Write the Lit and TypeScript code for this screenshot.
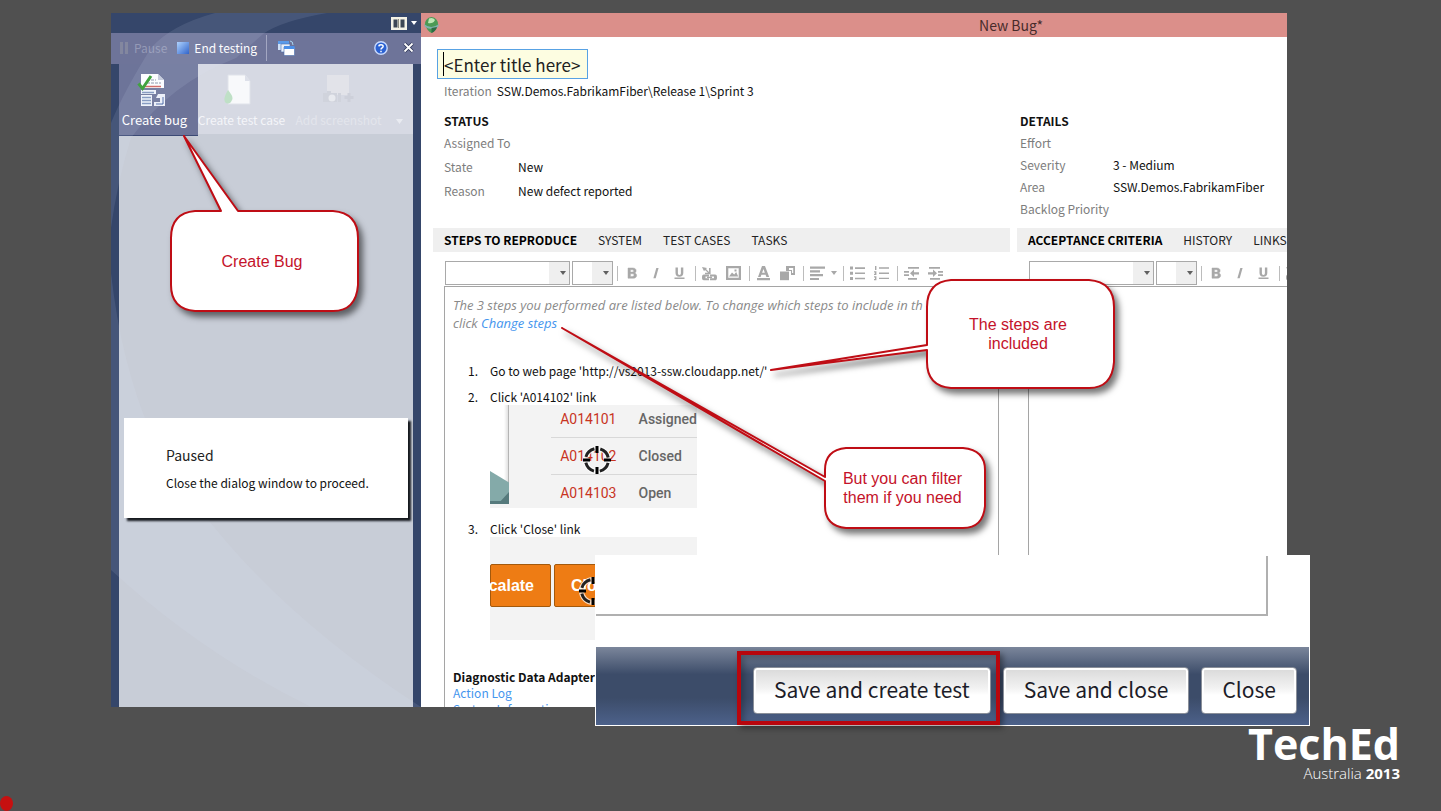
import { LitElement, html, svg, css } from "lit";
import { customElement, property } from "lit/decorators.js";

const icons = {
  bold: svg`<path d="M5 3h4.600c2.200 0 3.500 1 3.500 2.700 0 1.100-.6 1.900-1.600 2.200 1.300.3 2.100 1.200 2.100 2.500 0 1.900-1.400 2.800-3.700 2.800H5zm2.400 1.800v2.300h1.700c1 0 1.500-.4 1.500-1.200s-.5-1.100-1.500-1.100zm0 4v2.600h1.900c1.100 0 1.700-.4 1.700-1.300s-.6-1.300-1.700-1.300z" stroke="currentColor" stroke-width=".5"/>`,
  italic: svg`<path d="M9.300 3h2.300L8.700 13.200H6.400z"/>`,
  underline: svg`<path d="M4.500 2.500h2.400v5.500c0 1.300.5 1.900 1.500 1.900s1.500-.6 1.500-1.900V2.500h2.400v5.600c0 2.300-1.300 3.700-3.900 3.700s-3.900-1.400-3.900-3.700zM3.500 12.500h10V14h-10z"/>`,
  link: svg`<path d="M1 2l5 1-1 1 3 3V3h1.600v6.200H4V7.700h3L4 5 3 6.200z"/><path d="M3 9.500h5v2H4.500v1.700H8v2H3c-1.600 0-2-1-2-2.800s.4-2.900 2-2.900zM9 9.500h5c1.600 0 2 1 2 2.900s-.4 2.800-2 2.800H9v-2h4v-1.700H9zM6 11.700h5v1.200H6z"/>`,
  image: svg`<path fill-rule="evenodd" d="M1 1h15v14H1zm2.300 2.200v9.600h10.400V3.200zM4 11.500l3-4 2.200 2 2-2.500 2 4.500zM9.500 4.500h2v2h-2z"/>`,
  font: svg`<path fill-rule="evenodd" d="M7 1h3l4.200 11h-2.800l-.8-2.300H6.400L5.600 12H3zm.100 6.700h2.700L8.500 4zM2 13h13v2.200H2z"/>`,
  back: svg`<path fill-rule="evenodd" d="M7 1h9v9h-4V6H7zm3 2v2h3v3h1.200V3z"/><path d="M1 6.500h9v8.700H1z"/>`,
  align: svg`<path d="M1 1.500h15v2.200H1zM1 5.300h10v2.200H1zM1 9.100h13v2.200H1zM1 12.900h9v2.200H1z"/>`,
  bullets: svg`<path d="M1 1.500h3v3H1zM6 2.300h10v1.600H6zM1 6.700h3v3H1zM6 7.500h10v1.600H6zM1 11.900h3v3H1zM6 12.700h10v1.600H6z"/>`,
  numbers: svg`<path d="M2 1h1.400v4H2zM6 2.300h10v1.400H6zM1 6.200h2.400V10H1V8.800h1V7.500H1zM6 7.500h10v1.400H6zM1 11.200h2.400v4H1V14h1v-1.500H1zM6 12.700h10v1.400H6z"/>`,
  outdent: svg`<path d="M5 2h11v1.800H5zM1 6h5v1.800H1zM1 9.200h5v1.800H1zM5 13h9v1.800H5zM7 8.300l4-3.700v2.600h5v2.200h-5V12z"/>`,
  indent: svg`<path d="M2 2h11v1.800H2zM11 6h5v1.800h-5zM11 9.200h5v1.800h-5zM3 13h10v1.800H3zM10 8.300L6 4.600v2.600H1v2.200h5V12z"/>`,
};
type IconName = keyof typeof icons;

const target = html`<svg class="target" width="30" height="30" viewBox="0 0 30 30" fill="none" aria-hidden="true">
  <circle cx="15" cy="15" r="11.500" stroke="#fff" stroke-opacity=".75" stroke-width="5"/>
  <circle cx="15" cy="15" r="11.500" stroke="#222" stroke-width="3" stroke-dasharray="12.060 6" stroke-dashoffset="-3"/>
  <path d="M15 1v7M15 22v7M1 15h7M22 15h7" stroke="#000" stroke-width="3"/></svg>`;

@customElement("rich-toolbar")
class RichToolbar extends LitElement {
  @property() name = "";

  static styles = css`
    :host { display: flex; align-items: center; height: 34px; padding: 8px 1px 0; box-sizing: border-box; }
    select {
      appearance: none; box-sizing: border-box; height: 24px; width: 125px; margin: 0 2px 0 0; padding: 0 22px 0 4px;
      border: 1px solid #a9a9a9; border-radius: 0; flex: none;
      background:
        url("data:image/svg+xml,%3Csvg xmlns='http://www.w3.org/2000/svg' width='6' height='4'%3E%3Cpath d='M0 0h6L3 4z' fill='%23606060'/%3E%3C/svg%3E") right 3px center no-repeat,
        linear-gradient(#efefef, #efefef) right / 20px 100% no-repeat, #fff;
    }
    select.size { width: 41px; margin-right: 0; }
    i { width: 1px; height: 15px; background: #bcbcbc; margin: 0 1px 0 4px; flex: none; }
    button { width: 24px; height: 24px; padding: 0; border: 0; background: none; color: #a8a8a8; flex: none;
      display: flex; align-items: center; justify-content: center; }
    button.narrow { width: 10px; }
    svg { fill: currentColor; display: block; }
  `;

  private tool(name: IconName) {
    return html`<button type="button" aria-label=${name}><svg width="17" height="16" viewBox="0 0 17 16">${icons[name]}</svg></button>`;
  }

  render() {
    return html`
      <select aria-label="${this.name} font"></select>
      <select class="size" aria-label="${this.name} size"></select>
      <i></i>${this.tool("bold")}${this.tool("italic")}${this.tool("underline")}
      <i></i>${this.tool("link")}${this.tool("image")}
      <i></i>${this.tool("font")}${this.tool("back")}
      <i></i>${this.tool("align")}
      <button class="narrow" type="button" aria-label="more alignments"><svg width="6" height="4"><path d="M0 0h6L3 4z"/></svg></button>
      <i></i>${this.tool("bullets")}${this.tool("numbers")}
      <i></i>${this.tool("outdent")}${this.tool("indent")}
    `;
  }
}

@customElement("test-runner")
class TestRunner extends LitElement {
  static styles = css`
    :host { display: flex; flex-direction: column; position: relative; overflow: hidden; width: 310px; flex: none;
      background: #35466a; color: #fff; font-size: 12px; }
    button { font: inherit; color: inherit; border: 0; background: none; padding: 0; }
    svg { display: block; flex: none; }
    .swoosh { position: absolute; left: 0; top: 0; pointer-events: none; }
    .strip { display: flex; justify-content: flex-end; align-items: center; gap: 4px; height: 20px; padding-right: 4px; }
    .bar { display: flex; align-items: center; box-sizing: border-box; height: 31px; background: #6e7499; padding: 0 7px 2px 8px; }
    .bar button { display: flex; align-items: center; gap: 5px; white-space: nowrap; }
    .pause { color: #9499b6; margin-right: 10px; }
    .sep { width: 1px; height: 26px; background: #a3a7c2; margin: 0 11px 0 9px; }
    .help { margin-left: auto; margin-right: 15px; }
    .body { flex: 1; margin: 0 8px; background: #c8cdd7; }
    .tools { display: flex; height: 70px; background: #d6d9e3; }
    .tools button { display: flex; flex-direction: column; align-items: center; justify-content: flex-end; gap: 4px;
      white-space: nowrap; padding-bottom: 5px; line-height: 18px; width: 87px; }
    .tools .create { width: 79px; height: 72px; background: #6d7499; border-bottom: 1px solid #3c4a75; padding-bottom: 6px; padding-right: 8px; font-size: 13px; }
    .tools .case { color: #f4f5f9; }
    .tools .shot { color: #e3e5ec; width: 107px; }
    .tools .more { width: 14px; color: #e9ebf1; padding-bottom: 10px; }
    .dialog { position: absolute; left: 13px; right: 13px; top: 405px; box-sizing: border-box; height: 100px;
      padding: 27px 42px; background: #fff; color: #222; box-shadow: 3px 3px 2px #161a1f; }
    .dialog h2 { margin: 0 0 9px; font-size: 14px; font-weight: 400; line-height: 20px; }
    .dialog p { margin: 0; line-height: 18px; color: #111; white-space: nowrap; }
  `;

  render() {
    return html`
      <div class="strip">
        <svg width="16" height="13"><path d="M0 0h16v13H0z" fill="#f4f2e6"/><path d="M2.500 2.500h4v8h-4zM9.500 2.500h4v8h-4z" fill="#3c4654"/><path d="M7.500 2v9" stroke="#8d8d80"/></svg>
        <svg width="6" height="4"><path d="M0 0h6L3 4z" fill="#fff"/></svg>
      </div>
      <div class="bar">
        <button class="pause" type="button"><svg width="10" height="12"><path d="M1 0h3v12H1zM6 0h3v12H6z" fill="#83879f"/></svg>Pause</button>
        <button type="button"><svg width="12" height="12"><defs><linearGradient id="b" x2="1" y2="1"><stop stop-color="#a9d0ff"/><stop offset="1" stop-color="#1d55c4"/></linearGradient></defs><path d="M0 0h12v12H0z" fill="url(#b)"/></svg>End testing</button>
        <span class="sep"></span>
        <button type="button" aria-label="Windows"><svg width="17" height="16"><path d="M0 1h11v9H0z" fill="#cfe0f7"/><path d="M0 1h11v3H0z" fill="#5b9bea"/><path d="M3 4h9v8H3z" fill="#e9f0fa" stroke="#4a6fae" stroke-width=".6"/><path d="M6 7h10.500v8.500H6z" fill="#fff" stroke="#4a6fae" stroke-width=".6"/><path d="M6 6h10.500v3H6z" fill="#4b8fe8"/><path d="M12 1q3 0 3 4" stroke="#a9d7f5" fill="none"/></svg></button>
        <button class="help" type="button" aria-label="Help"><svg width="14" height="14"><circle cx="7" cy="7" r="6.200" fill="#2c62d2" stroke="#c8daff" stroke-width="1.400"/><path d="M4.900 5.400C5 3.200 9.200 3.200 9.100 5.500 9 7 7 6.900 7 8.600M7 9.800v1.500" stroke="#fff" stroke-width="1.500" fill="none"/></svg></button>
        <button type="button" aria-label="Close"><svg width="11" height="11"><path d="M1.500 1.500l8 8M9.500 1.500l-8 8" stroke="#2d3555" stroke-width="3.400"/><path d="M1.500 1.500l8 8M9.500 1.500l-8 8" stroke="#fff" stroke-width="1.800"/></svg></button>
      </div>
      <div class="body">
        <div class="tools">
          <button class="create" type="button">
            <svg width="36" height="34"><path d="M4 1h17l6 6v8H4z" fill="#fff"/><path d="M21 1v6h6z" fill="#c4cadb"/><path d="M10 7h9M10 10h14" stroke="#8a92a5" stroke-dasharray="3 1"/><path d="M8 13.500h16" stroke="#d2605a" stroke-width="1.500"/><path d="M4 17h15v4H4zM4 22h11v11H4z" fill="#f1f4fa"/><path d="M5 19.500h12M5 24.500h9M5 27.500h9M5 30.500h9" stroke="#7d94bb" stroke-width="1.300"/><path d="M21 21h7v12H17v-4h6v-4h-4z" fill="#eef1f9"/><path d="M19 31h7v-7" stroke="#4a68a6" fill="none"/><path d="M1.500 10.500l4 5L14 3" stroke="#2f9a2b" stroke-width="3" fill="none"/></svg>
            Create bug</button>
          <button class="case" type="button">
            <svg width="38" height="34"><path d="M5 2h17l5 6v23H5z" fill="#f8f9fb" stroke="#e0e3ea"/><path d="M22 2v6h5z" fill="#dde0e9"/><path d="M5 17q6 7 4 10-2 5-6 3-4-3 2-13z" fill="#bfe0c6"/></svg>
            Create test case</button>
          <button class="shot" type="button">
            <svg width="34" height="34"><path d="M5 2h22v20H5z" fill="#e2e3e9"/><path d="M1 20h4v-2h4v2h6v9H1zM16 20h3v9h-3z" fill="#d0d3dc"/><circle cx="10" cy="25" r="3.500" fill="#e8eaef"/><path d="M27 20v9M22.500 24.500h9" stroke="#cdd0da" stroke-width="3"/></svg>
            Add screenshot</button>
          <button class="more" type="button" aria-label="Screenshot options"><svg width="7" height="5"><path d="M0 0h7L3.500 5z" fill="currentColor"/></svg></button>
        </div>
      </div>
      <svg class="swoosh" width="310" height="694" fill="#dfe8ff" fill-opacity=".1">
        <path d="M104 0Q60 12 40 35 12 80 0 110V215Q6 170 20 125 60 70 125 45L152 21Q170 8 216 0z"/>
        <path d="M0 260V557Q90 640 200 694H310Q120 570 40 420 10 350 0 260z"/>
      </svg>
      <section class="dialog"><h2>Paused</h2><p>Close the dialog window to proceed.</p></section>
    `;
  }
}

@customElement("bug-form")
class BugForm extends LitElement {
  static styles = css`
    :host { display: block; flex: 1; min-width: 0; overflow: hidden; background: #fff; color: #111; font-size: 12px; line-height: 18px; }
    .window { width: calc(100% + 314px); }
    header { display: flex; align-items: center; height: 24px; padding: 0 4px 0 3px; box-sizing: border-box; background: #db8f8a; }
    header h1 { flex: 1; margin: 0 14px 0 0; text-align: center; font-size: 14px; font-weight: 400; color: #472b2b; }
    .form { padding: 12px 7px 0 12px; }
    .title { display: flex; align-items: center; box-sizing: border-box; width: 151px; height: 30px; margin-left: 4px; padding-left: 5px;
      border: 1px solid #58a2e4; background: #fdfde1; }
    .title i { width: 1px; height: 24px; background: #000; flex: none; }
    .title input { flex: 1; min-width: 0; height: 28px; box-sizing: border-box; border: 0; padding: 0; background: none; font: inherit; font-size: 17px; color: #222; outline: 0; }
    .iteration { display: flex; gap: 5px; margin: 3px 0 12px 11px; color: #111; }
    label, dt { color: #7d7d7d; }
    .cols { display: grid; grid-template-columns: minmax(0, 1fr) minmax(0, 1fr); column-gap: 7px; }
    .fields { padding-left: 11px; }
    .fields.right { padding-left: 3px; }
    h2 { margin: 0; font-size: 12px; font-weight: 600; line-height: 18px; }
    dl { margin: 1px 0 0; display: grid; grid-template-columns: 74px 1fr; grid-auto-rows: 24px; align-items: center; white-space: nowrap; }
    .right dl { grid-template-columns: 93px 1fr; grid-auto-rows: 22px; margin-top: 2px; }
    dd { margin: 0; }
    nav { display: flex; align-items: center; gap: 21px; height: 24px; margin-top: 8px; padding: 0 11px 1px; box-sizing: border-box; background: #efefef; white-space: nowrap; }
    nav a { color: #222; text-decoration: none; }
    nav a.on { font-weight: 600; color: #000; }
    rich-toolbar { margin-left: 11px; }
    .editor { box-sizing: border-box; margin: 0 11px; height: 430px; border: 1px solid #a5a5a5; padding: 9px 8px; }
    .note { margin: 0; color: #8a8a8a; font-family: "Open Sans", sans-serif; font-size: 13px; font-style: italic; height: 36px; white-space: nowrap; }
    a { color: #4596ee; text-decoration: none; }
    ol { margin: 30px 0 0; padding: 0 0 0 37px; list-style: none; counter-reset: step; }
    li { margin-bottom: 8px; padding: 0; counter-increment: step; }
    li::before { content: counter(step) "."; display: inline-block; width: 22px; margin-left: -22px; }
    li.pic { margin-bottom: 12px; line-height: 17px; }
    .shot { display: block; position: relative; overflow: hidden; width: 207px; height: 103px; background: #f3f3f3; font-family: Roboto, sans-serif; font-size: 14px; }
    .table { display: flex; }
    .table table { border-collapse: collapse; margin: -4px 0 0 42px; color: #666; font-weight: 500; }
    td { height: 36px; padding: 0 0 0 9px; border-bottom: 1px solid #d8d8d8; white-space: nowrap; }
    td:first-child { color: #c8341f; width: 73px; padding-right: 3px; font-weight: 400; }
    tr:last-child td { border: 0; }
    .target { position: absolute; left: 92px; top: 40px; }
    .actions { display: flex; gap: 3px; align-items: center; padding-bottom: 6px; box-sizing: border-box; }
    .actions button { box-sizing: border-box; height: 43px; width: 61px; padding: 0; border: 1px solid #a3590c; border-radius: 2px; background: #ee7c14; color: #fff;
      font: bold 16px "Liberation Sans", sans-serif; flex: none; display: flex; justify-content: flex-end; padding-right: 16px; align-items: center; }
    .actions .close { width: 81px; justify-content: flex-start; padding: 0 16px; }
    .actions .target { top: 39px; left: 88px; }
    h3 { margin: 29px 0 0; font-size: 12px; font-weight: 600; line-height: 16px; }
    .logs { display: flex; flex-direction: column; line-height: 16px; }
  `;

  private row(label: string, value = "") {
    return html`<dt>${label}</dt><dd>${value}</dd>`;
  }

  render() {
    return html`<div class="window">
      <header>
        <svg width="15" height="18"><path d="M7.500 1Q14 2 14 8.500 12 15 7.500 17 3 15 1 8.500 1 2 7.500 1z" fill="#4b9a55"/><path d="M5 2.500Q9 1 11 4 9 8 4 7z" fill="#bfe6b5"/><path d="M0 8q7 6 15 0l-1 3q-6 4-13 0z" fill="#7fb2ae"/><path d="M7.500 12v5Q12 15 13 11z" fill="#2c6c44"/></svg>
        <h1>New Bug*</h1>
      </header>
      <div class="form">
        <div class="title"><i></i><input aria-label="Title" value="<Enter title here>"></div>
        <div class="iteration"><label>Iteration</label><span>SSW.Demos.FabrikamFiber\\Release 1\\Sprint 3</span></div>
        <div class="cols">
          <section class="fields"><h2>STATUS</h2>
            <dl>${this.row("Assigned To")}${this.row("State", "New")}${this.row("Reason", "New defect reported")}</dl></section>
          <section class="fields right"><h2>DETAILS</h2>
            <dl>${this.row("Effort")}${this.row("Severity", "3 - Medium")}${this.row("Area", "SSW.Demos.FabrikamFiber")}${this.row("Backlog Priority")}</dl></section>
        </div>
        <div class="cols">
          <div>
            <nav><a class="on" href="#steps">STEPS TO REPRODUCE</a><a href="#system">SYSTEM</a><a href="#cases">TEST CASES</a><a href="#tasks">TASKS</a></nav>
            <rich-toolbar name="Steps"></rich-toolbar>
            <div class="editor">
              <p class="note">The 3 steps you performed are listed below. To change which steps to include in th<br>click <a href="#change">Change steps</a></p>
              <ol>
                <li>Go to web page 'http://vs2013-ssw.cloudapp.net/'</li>
                <li class="pic">Click 'A014102' link
                  <div class="shot table">
                    <svg width="20" height="103"><defs><linearGradient id="e"><stop stop-color="#fff"/><stop offset=".6" stop-color="#e4e4e4"/><stop offset="1" stop-color="#666"/></linearGradient></defs><path d="M0 0h20v99H0z" fill="#fff"/><path d="M14 0h6v99h-6z" fill="url(#e)"/><path d="M0 66l20 12v21H0z" fill="#84aaa9"/><path d="M8 99l12-13v13zM0 96h20v3H0z" fill="#567a7c"/></svg>
                    <table><tr><td>A014101</td><td>Assigned</td></tr><tr><td>A014102</td><td>Closed</td></tr><tr><td>A014103</td><td>Open</td></tr></table>
                    ${target}
                  </div></li>
                <li class="pic">Click 'Close' link
                  <div class="shot actions"><button type="button">Escalate</button><button class="close" type="button">Close</button>${target}</div></li>
              </ol>
              <h3>Diagnostic Data Adapter</h3>
              <div class="logs"><a href="#action">Action Log</a><a href="#info">System Information</a></div>
            </div>
          </div>
          <div>
            <nav><a class="on" href="#criteria">ACCEPTANCE CRITERIA</a><a href="#history">HISTORY</a><a href="#links">LINKS</a></nav>
            <rich-toolbar name="Criteria"></rich-toolbar>
            <div class="editor"></div>
          </div>
        </div>
      </div>
    </div>`;
  }
}

@customElement("app-root")
class AppRoot extends LitElement {
  static styles = css`
    :host { display: flex; flex-direction: column; position: relative; overflow: hidden; box-sizing: border-box; height: 100vh; background: #505050;
      font-family: "Noto Sans CJK SC", "Noto Sans", sans-serif; }
    main { flex: 1; min-height: 0; display: flex; margin: 13px 154px 0 111px; }
    .brand { height: 104px; box-sizing: border-box; padding: 15px 41px 0 0; text-align: right; color: #fff; font-family: "Open Sans", sans-serif; }
    .brand strong { display: block; font-size: 43px; line-height: 44px; font-weight: 700; }
    .brand span { display: block; font-size: 15px; line-height: 14px; font-weight: 300; }
    .brand b { font-weight: 700; }
    .dot { position: absolute; left: 0; bottom: 0; width: 13px; height: 15px; border-radius: 50%; background: #c61010; }
    .inset { position: absolute; left: 595px; right: 131px; top: 555px; box-sizing: border-box; height: 171px; display: flex; flex-direction: column;
      border: 1px solid #fff; background: #fff; }
    .pane { height: 58px; margin-right: 41px; border: solid #b0b0b0; border-width: 0 2px 2px 0; }
    .foot { flex: 1; margin-top: 31px; display: flex; align-items: center; justify-content: flex-end; gap: 12px; padding: 8px 12px 0 0;
      background: linear-gradient(#7b869b, #3c4c69 35%, #3c4c69 65%, #4c618a); }
    .foot button { position: relative; box-sizing: border-box; height: 47px; padding: 0 20px 3px; border: 1px solid #8a8f99; border-radius: 4px;
      background: linear-gradient(#d9d9d9, #f2f2f2 45%, #fff 60%, #fff); box-shadow: inset 0 0 0 2px #fff; font: inherit; font-size: 21px; color: #1c1c28; white-space: nowrap; }
    .marked::after { content: ""; position: absolute; inset: -17px -10px -12px -17px; border: 4px solid #b8060d; box-shadow: 3px 3px 6px #0006, inset 3px 3px 6px #0004; }
    .callout { position: absolute; display: flex; align-items: center; justify-content: center; text-align: center; margin: 0;
      font: 16px/19px "Liberation Sans", sans-serif; color: #c4122a; }
    .callout svg { position: absolute; left: 0; top: 0; overflow: visible; filter: drop-shadow(4px 5px 3px #0008); }
    .callout path { fill: #fff; stroke: #bf0d15; stroke-width: 2; stroke-linejoin: round; }
    .callout span { position: relative; padding-right: 4px; }
    .create { left: 170px; top: 211px; width: 188px; height: 100px; }
    .steps { left: 926px; top: 280px; width: 188px; height: 108px; }
    .filter { left: 824px; top: 448px; width: 161px; height: 80px; }
  `;

  render() {
    return html`
      <main><test-runner></test-runner><bug-form></bug-form></main>
      <footer class="brand"><strong>TechEd</strong><span>Australia <b>2013</b></span></footer>
      <section class="inset">
        <div class="pane"></div>
        <div class="foot">
          <button class="marked" type="button">Save and create test</button>
          <button type="button">Save and close</button>
          <button type="button">Close</button>
        </div>
      </section>
      <p class="callout create">
        <svg width="188" height="100"><path d="M25 0H51L14-75 68 0H163Q188 2 188 27V74Q186 100 163 100H25Q1 98 1 74V27Q1 2 25 0z"/></svg>
        <span>Create Bug</span></p>
      <p class="callout steps">
        <svg width="188" height="108"><path d="M25 0H163Q188 2 188 27V82Q186 108 163 108H25Q1 106 1 82V70L-155 90 1 65V27Q1 2 25 0z"/></svg>
        <span>The steps are<br>included</span></p>
      <p class="callout filter">
        <svg width="161" height="80"><path d="M22 0H139Q161 2 161 22V58Q159 80 139 80H22Q1 78 1 58V33L-262-120 1 29V22Q1 2 22 0z"/></svg>
        <span>But you can filter<br>them if you need</span></p>
      <span class="dot"></span>
    `;
  }
}
